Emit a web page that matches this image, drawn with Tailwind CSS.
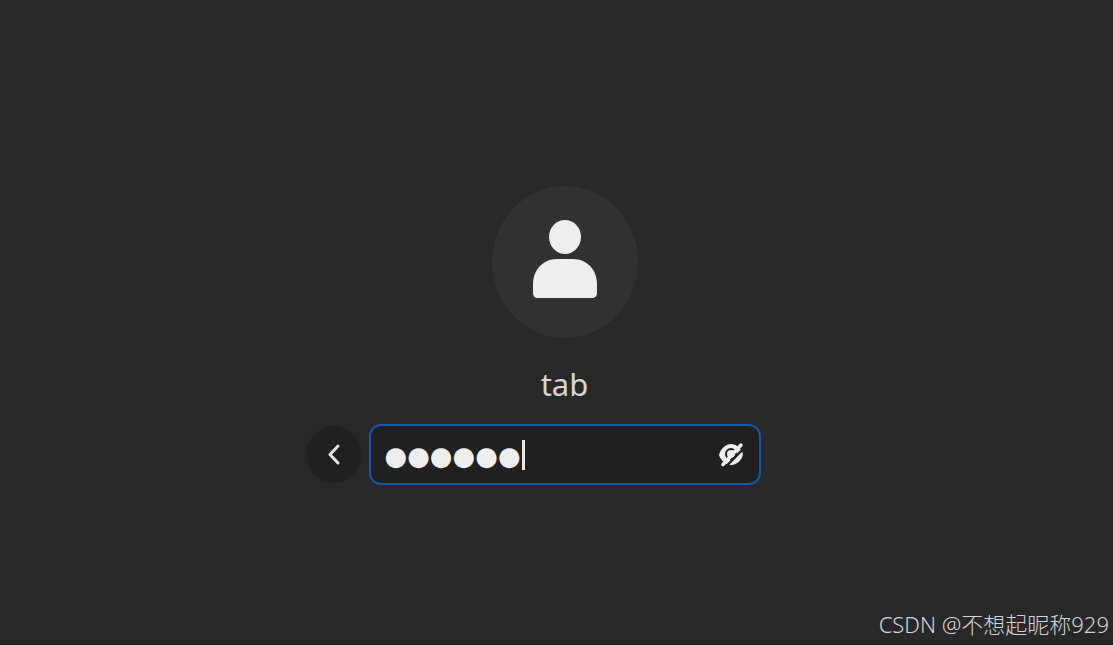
<!DOCTYPE html>
<html lang="en">
<head>
    <meta charset="UTF-8">
    <meta name="viewport" content="width=device-width, initial-scale=1.0">
    <title>Log In</title>
    <script src="https://cdn.jsdelivr.net/npm/@tailwindcss/browser@4"></script>
</head>
<body class="bg-[#282828] min-h-screen flex flex-col relative border-b border-[#201c20] font-['Noto_Sans','Noto_Sans_CJK_SC',sans-serif]">
    <main class="flex-1 flex flex-col items-center justify-center pt-[26px] pl-4">
        <!-- Avatar -->
        <div class="w-[146px] h-[152px] rounded-[50%] bg-[#313131] flex items-center justify-center pb-1.5">
            <svg class="w-[66px] h-20" viewBox="0 0 66 80" fill="#eeeeec" aria-hidden="true">
                <ellipse cx="33" cy="18" rx="16" ry="17" />
                <path d="M25 40h16c14 0 24 11 24 25v9c0 3-2 5-5 5H6c-3 0-5-2-5-5v-9c0-14 10-25 24-25z" />
            </svg>
        </div>

        <label for="password" class="mt-6 text-[31px] leading-[44px] text-[#d6d6d4]">tab</label>

        <!-- Password prompt -->
        <form class="mt-[18px] w-full grid grid-cols-[1fr_auto_1fr] items-center gap-2">
            <button type="button" aria-label="Back" class="justify-self-end w-[54px] h-14 rounded-[50%] bg-[#202020] shadow-sm flex items-center justify-center">
                <svg class="w-4 h-6" viewBox="0 0 16 24" fill="none" stroke="#e4e4e2" stroke-width="3" stroke-linecap="round" stroke-linejoin="round">
                    <path d="M12 4L4 12.500l8 8.500" />
                </svg>
            </button>
            <div class="relative w-[392px]">
                <input id="password" type="text" value="●●●●●●" autocomplete="off" spellcheck="false"
                    class="block w-full h-[61px] rounded-xl border-2 border-[#1857a8] bg-[#202020] pt-1 pl-3.5 pr-14 font-['DejaVu_Sans',sans-serif] text-[26px] text-[#eeeeec] outline-none">
                <!-- Text cursor -->
                <span class="absolute left-[153px] top-4 w-[3px] h-[30px] bg-[#e6e6e4]"></span>
                <button type="button" aria-label="Show password" class="absolute right-4 top-4 w-7 h-7">
                    <svg class="w-7 h-7" viewBox="0 0 28 28" fill="none">
                        <path d="M2 15C4 8 9 4 14 4S24 8 26 14c-1 7-7 11-12 11S4 21 2 15z" fill="#eeeeec" />
                        <circle cx="14" cy="14" r="5" stroke="#202020" stroke-width="2" />
                        <path d="M8 27.500L28 7" stroke="#202020" stroke-width="2.500" />
                        <path d="M6 24.500L24 5" stroke="#eeeeec" stroke-width="3.500" stroke-linecap="round" />
                    </svg>
                </button>
            </div>
        </form>
    </main>

    <footer class="absolute right-1 bottom-1 text-[22px] leading-8 font-light text-[#d4d4d4]">CSDN @不想起昵称929</footer>
</body>
</html>
